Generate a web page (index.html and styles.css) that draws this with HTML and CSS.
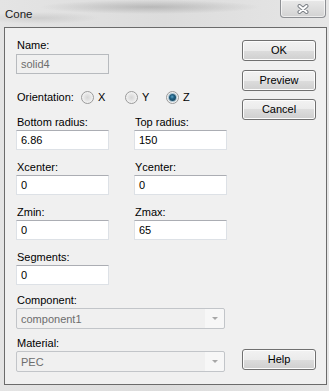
FILE: index.html
```html
<!DOCTYPE html>
<html lang="en">
<head>
    <meta charset="UTF-8">
    <title>Cone</title>
    <link rel="stylesheet" href="styles.css">
</head>
<body>
    <div class="window">
        <!-- Title bar -->
        <div class="titlebar">
            <span class="title">Cone</span>
            <div class="close">
                <svg width="12" height="10" viewBox="0 0 12 10">
                    <path d="M2.5 2 L9.5 8 M9.5 2 L2.5 8" stroke="#7d8187" stroke-width="4" stroke-linecap="round"/>
                    <path d="M2.5 2 L9.5 8 M9.5 2 L2.5 8" stroke="#ffffff" stroke-width="2" stroke-linecap="round"/>
                </svg>
            </div>
        </div>

        <!-- Dialog body -->
        <div class="client">
            <div class="fields">
                <div class="field name-field">
                    <div class="label">Name:</div>
                    <div class="box disabled">solid4</div>
                </div>

                <div class="orientation">
                    <span class="orient-label">Orientation:</span>
                    <span class="radio-item item-x"><span class="radio"></span>X</span>
                    <span class="radio-item item-y"><span class="radio"></span>Y</span>
                    <span class="radio-item"><span class="radio checked"></span>Z</span>
                </div>

                <div class="field row-first">
                    <div class="label">Bottom radius:</div>
                    <div class="box">6.86</div>
                </div>
                <div class="field row-first">
                    <div class="label">Top radius:</div>
                    <div class="box">150</div>
                </div>

                <div class="field">
                    <div class="label">Xcenter:</div>
                    <div class="box">0</div>
                </div>
                <div class="field">
                    <div class="label">Ycenter:</div>
                    <div class="box">0</div>
                </div>

                <div class="field">
                    <div class="label">Zmin:</div>
                    <div class="box">0</div>
                </div>
                <div class="field">
                    <div class="label">Zmax:</div>
                    <div class="box">65</div>
                </div>

                <div class="field">
                    <div class="label">Segments:</div>
                    <div class="box">0</div>
                </div>

                <div class="field wide component-field">
                    <div class="label">Component:</div>
                    <div class="combo">
                        <span class="combo-text">component1</span>
                        <span class="combo-arrow"></span>
                    </div>
                </div>

                <div class="field wide material-field">
                    <div class="label">Material:</div>
                    <div class="combo">
                        <span class="combo-text">PEC</span>
                        <span class="combo-arrow"></span>
                    </div>
                </div>
            </div>

            <div class="buttons">
                <div class="btn btn-ok">OK</div>
                <div class="btn btn-preview">Preview</div>
                <div class="btn btn-cancel">Cancel</div>
                <div class="btn btn-help">Help</div>
            </div>
        </div>
    </div>
</body>
</html>
```

FILE: styles.css
```css
/* Basic Reset */
* {
    margin: 0;
    padding: 0;
    box-sizing: border-box;
}

/* Aero frame */
body {
    width: 329px;
    height: 391px;
    overflow: hidden;
    font-family: 'Liberation Sans', Arial, sans-serif;
    font-size: 11px;
    color: #000;
    background:
        radial-gradient(ellipse 110px 7px at 150px 7px, rgba(140, 140, 140, 0.45), rgba(140, 140, 140, 0)),
        radial-gradient(ellipse 60px 6px at 40px 18px, rgba(160, 160, 160, 0.3), rgba(160, 160, 160, 0)),
        linear-gradient(90deg, #e4e4e4, #dcdcdc 50%, #e6e6e6);
}

.window {
    height: 391px;
    display: flex;
    flex-direction: column;
}

/* Title bar */
.titlebar {
    height: 27px;
    display: flex;
    justify-content: space-between;
    align-items: flex-start;
}

.title {
    font-size: 11.5px;
    line-height: 14px;
    padding: 7px 0 0 5px;
    color: #1a1a1a;
}

.close {
    width: 46px;
    height: 18px;
    margin-right: 3px;
    border: 1px solid #8e9094;
    border-top: none;
    border-radius: 0 0 4px 4px;
    background: linear-gradient(#e9e9e9, #dedede 50%, #d2d2d2);
    box-shadow: inset 0 0 0 1px rgba(255, 255, 255, 0.6);
    display: flex;
    justify-content: center;
    align-items: center;
}

/* Client area */
.client {
    flex: 1;
    margin: 0 2px 6px 4px;
    border: 1px solid #6b6b6b;
    background-color: #f0f0f0;
    display: grid;
    grid-template-columns: 1fr 74px;
    align-items: start;
    align-content: start;
    padding: 11px 10px 0 11px;
}

.fields {
    display: grid;
    grid-template-columns: 118px 93px;
}

.label {
    line-height: 13px;
    height: 13px;
    padding-left: 1px;
    margin-bottom: 1px;
    white-space: nowrap;
}

.field {
    margin-top: 11px;
}

.name-field {
    margin-top: 0;
    grid-column: 1 / 3;
}

.name-field .label {
    margin-bottom: 2px;
}

.name-field .box {
    width: 93px;
}

.row-first {
    margin-top: 12px;
}

.box {
    height: 20px;
    width: 93px;
    border: 1px solid #dde1e6;
    border-top-color: #abadb3;
    background-color: #fff;
    padding: 0 4px;
    line-height: 18px;
}

.box.disabled {
    background-color: #f0f0f0;
    border-color: #b7babe;
    color: #6d6d6d;
}

/* Orientation radios */
.orientation {
    grid-column: 1 / 3;
    margin-top: 17px;
    height: 13px;
    display: flex;
    align-items: center;
    line-height: 13px;
}

.orient-label {
    width: 65px;
    padding-left: 1px;
}

.radio-item {
    display: flex;
    align-items: center;
    gap: 4px;
}

.item-x {
    width: 44px;
}

.item-y {
    width: 41px;
}

.radio {
    width: 13px;
    height: 13px;
    border-radius: 50%;
    border: 1px solid #9a9a9a;
    background: radial-gradient(circle at 50% 50%, #d6d6d6 0, #e4e4e4 3px, #f6f6f6 6px);
    display: flex;
    justify-content: center;
    align-items: center;
}

.radio.checked::after {
    content: '';
    width: 7px;
    height: 7px;
    border-radius: 50%;
    background: radial-gradient(circle at 45% 40%, #5ea6c9 0, #1f5f82 2px, #174a66 4px);
    box-shadow: 0 0 0 1px #a9c4d2;
}

/* Combo boxes */
.wide {
    grid-column: 1 / 3;
}

.component-field {
    margin-top: 9px;
}

.material-field {
    margin-top: 8px;
}

.combo {
    width: 209px;
    height: 21px;
    border: 1px solid #c2c5c9;
    border-radius: 2px;
    background: linear-gradient(90deg, #f0f0f0 188px, #f7f7f7 188px);
    display: flex;
    align-items: center;
    justify-content: space-between;
    padding: 0 6px 0 4px;
    color: #6d6d6d;
}

.combo-arrow {
    width: 0;
    height: 0;
    border-left: 3px solid transparent;
    border-right: 3px solid transparent;
    border-top: 3px solid #a7a7a7;
}

/* Buttons */
.buttons {
    align-self: stretch;
    display: flex;
    flex-direction: column;
}

.btn {
    height: 21px;
    border: 1px solid #707070;
    border-radius: 3px;
    background: linear-gradient(#f2f2f2, #ebebeb 50%, #dddddd 50%, #cfcfcf);
    box-shadow: inset 0 0 0 1px #fcfcfc;
    text-align: center;
    line-height: 19px;
}

.btn-ok {
    margin-top: 1px;
}

.btn-preview {
    margin-top: 9px;
}

.btn-cancel {
    margin-top: 8px;
}

.btn-help {
    margin-top: auto;
    margin-bottom: 2px;
}
```
